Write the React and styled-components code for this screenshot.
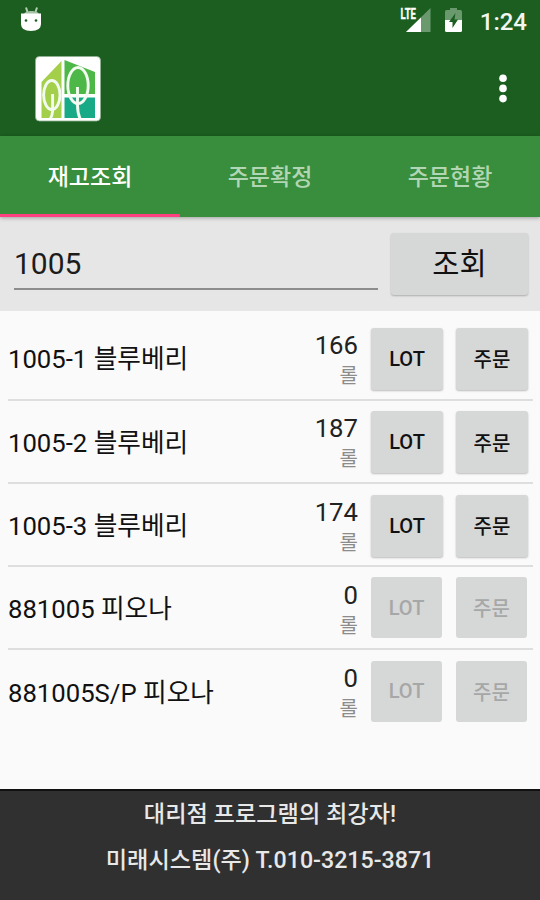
import React, { useState } from "react";
import styled, { createGlobalStyle } from "styled-components";

const GlobalStyle = createGlobalStyle`
  * {
    box-sizing: border-box;
  }
  body {
    margin: 0;
    background-color: #fafafa;
    font-family: Roboto, "Noto Sans CJK KR", sans-serif;
  }
  button, input {
    font-family: inherit;
  }
`;

const Layout = styled.div`
  width: 540px;
  height: 900px;
  display: flex;
  flex-direction: column;
  overflow: hidden;
  background-color: #fafafa;
`;

const StatusBar = styled.div`
  height: 42px;
  flex: none;
  padding: 0 13px 0 19px;
  display: flex;
  justify-content: space-between;
  background-color: #1b5e20;
`;

const StatusIcons = styled.div`
  display: flex;
  align-items: flex-start;
`;

const Clock = styled.span`
  margin: 8px 0 0 18px;
  line-height: 28px;
  font-size: 24px;
  font-weight: 500;
  color: #f1f6f1;
`;

const AppBar = styled.header`
  height: 93.5px;
  flex: none;
  padding: 0 27px 0 34px;
  display: flex;
  align-items: center;
  justify-content: space-between;
  background-color: #1b5e20;
`;

const MenuButton = styled.button`
  width: 18px;
  height: 36px;
  padding: 0;
  border: none;
  background: none;
`;

const Tabs = styled.nav`
  height: 81px;
  flex: none;
  display: flex;
  background-color: #388e3c;
  position: relative;
  box-shadow: 0 1px 4px rgba(0, 0, 0, 0.3);
`;

const Tab = styled.button`
  flex: 1;
  padding: 1px 0 0;
  border: none;
  border-bottom: 3px solid ${(props) => (props.$active ? "#ff4081" : "transparent")};
  background: none;
  font-size: 23px;
  font-weight: 500;
  color: ${(props) => (props.$active ? "#fff" : "#b2d6b4")};
`;

const SearchBar = styled.section`
  height: 94.5px;
  flex: none;
  padding: 16px 12px 15px 14px;
  display: flex;
  gap: 13px;
  background-color: #e6e6e6;
`;

const SearchInput = styled.input`
  flex: 1;
  min-width: 0;
  height: 57px;
  padding: 7px 0 0;
  border: none;
  border-bottom: 2px solid #8d8d8d;
  border-radius: 0;
  outline: none;
  background: none;
  font-size: 30px;
  color: #1c1c1c;
`;

const Button = styled.button`
  width: 72px;
  height: 62px;
  flex: none;
  padding: 0;
  border: none;
  border-radius: 3px;
  background-color: #d6d7d7;
  font-size: 20px;
  font-weight: 500;
  color: #111;
  box-shadow: 0 1px 2px rgba(0, 0, 0, 0.25);

  &:disabled {
    width: 71px;
    height: 61px;
    margin: 0 1px 2px 0;
    color: #a6a7a7;
    box-shadow: none;
  }
`;

const SearchButton = styled(Button)`
  width: 137px;
  height: 62px;
  padding-bottom: 5px;
  font-size: 29.5px;
  font-weight: 400;
`;

const StockList = styled.ul`
  flex: 1;
  margin: 0;
  padding: 6.3px 7px 0 8px;
  list-style: none;
`;

const StockItem = styled.li`
  height: 83.3px;
  padding: 2px 5px 0 0;
  display: flex;
  align-items: center;
  border-bottom: 2px solid #dedede;

  &:last-child {
    border-bottom-color: transparent;
  }
`;

const StockName = styled.div`
  flex: 1;
  padding-bottom: 4px;
  font-size: 25.7px;
  color: #111;
`;

const StockCount = styled.div`
  margin-right: 13px;
  padding-top: 3px;
  display: flex;
  flex-direction: column;
  align-items: flex-end;
`;

const Quantity = styled.span`
  line-height: 32px;
  font-size: 25.7px;
  color: #222;
`;

const Unit = styled.span`
  line-height: 31px;
  font-size: 20px;
  color: #8c8c8c;
`;

const ButtonGroup = styled.div`
  display: flex;
  align-items: center;
  gap: 13px;
`;

const Footer = styled.footer`
  height: 111px;
  flex: none;
  padding-top: 0;
  border-top: 2px solid #111;
  background-color: #303030;
  text-align: center;
`;

const FooterText = styled.p`
  margin: 0;
  line-height: 46px;
  font-size: 23.2px;
  font-weight: 500;
  color: #e8e8e8;
`;

const AndroidIcon = () => (
  <svg width="24" height="42" viewBox="0 0 24 42">
    <path d="M7 7.5l1.5 4.5M18 7.5l-1.5 4.5" stroke="#b7ceb8" strokeWidth="2" />
    <path d="M5 14.2C6 10 19 10 20 14.2Z" fill="#a5c2a7" />
    <path d="M2 13.5H22V24Q22 31 12 31T2 24Z" fill="#fff" />
    <circle cx="7" cy="20.5" r="1.3" fill="#1b5e20" />
    <circle cx="17" cy="20.5" r="1.3" fill="#1b5e20" />
  </svg>
);

const SignalIcon = () => (
  <svg width="32" height="42" viewBox="0 0 32 42">
    <path d="M31.5 8V32H7Z" fill="#6b996e" />
    <path d="M22 17.5V32H7Z" fill="#fff" />
    <path d="M0 6H17.5V18.5L15.5 20.5H0Z" fill="#1b5e20" />
    <text
      x="1.5"
      y="19"
      fontSize="15"
      fontWeight="700"
      fill="#fff"
      stroke="#fff"
      strokeWidth="0.3"
      textLength="15.5"
      lengthAdjust="spacingAndGlyphs"
    >
      LTE
    </text>
  </svg>
);

const BatteryIcon = () => (
  <svg width="17" height="42" viewBox="0 0 17 42" style={{ marginLeft: 14 }}>
    <path d="M5 8H12V10H15.5Q17 10 17 12V20H0V12Q0 10 1.5 10H5Z" fill="#6b996e" />
    <path d="M0 20H17V30.5Q17 32 15.5 32H1.5Q0 32 0 30.5Z" fill="#fff" />
    <path d="M10.5 13L4 22H7.5V28L13 19.5H9.5Z" fill="#1b5e20" />
  </svg>
);

const Logo = () => (
  <svg width="68" height="68" viewBox="0 0 68 68">
    <rect x="1.5" y="1.5" width="65" height="64.5" rx="4" fill="#fff" stroke="#8fb092" strokeWidth="0.8" />
    <path d="M7.5 27L27.5 6V63H7.5Z" fill="#a3cf4a" />
    <path d="M30.5 5L61 17V39H30.5Z" fill="#4db848" />
    <path d="M30.5 42.5H61V63H30.5Z" fill="#18a986" />
    <g fill="none" stroke="#f3faef" strokeWidth="2.9">
      <ellipse cx="17.8" cy="40" rx="8.2" ry="14.5" />
      <path d="M18.6 39V56Q18.4 60 16.5 63.5" />
      <ellipse cx="44" cy="30.5" rx="10.2" ry="18" />
      <path d="M43.5 32V50Q43.5 58 46 63.5" />
    </g>
  </svg>
);

const MoreIcon = () => (
  <svg width="18" height="36" viewBox="0 0 18 36" fill="#fff">
    <circle cx="8" cy="7.2" r="3.8" />
    <circle cx="8" cy="17.4" r="3.8" />
    <circle cx="8" cy="27.6" r="3.8" />
  </svg>
);

const tabs = ["재고조회", "주문확정", "주문현황"];

const stocks = [
  { name: "1005-1 블루베리", quantity: 166 },
  { name: "1005-2 블루베리", quantity: 187 },
  { name: "1005-3 블루베리", quantity: 174 },
  { name: "881005 피오나", quantity: 0 },
  { name: "881005S/P 피오나", quantity: 0 },
];

const App = () => {
  const [activeTab, setActiveTab] = useState(tabs[0]);
  const [keyword, setKeyword] = useState("1005");

  return (
    <>
      <GlobalStyle />
      <Layout>
        <StatusBar>
          <AndroidIcon />
          <StatusIcons>
            <SignalIcon />
            <BatteryIcon />
            <Clock>1:24</Clock>
          </StatusIcons>
        </StatusBar>
        <AppBar>
          <Logo />
          <MenuButton>
            <MoreIcon />
          </MenuButton>
        </AppBar>
        <Tabs>
          {tabs.map((tab) => (
            <Tab key={tab} $active={tab === activeTab} onClick={() => setActiveTab(tab)}>
              {tab}
            </Tab>
          ))}
        </Tabs>
        <SearchBar>
          <SearchInput value={keyword} onChange={(e) => setKeyword(e.target.value)} />
          <SearchButton>조회</SearchButton>
        </SearchBar>
        <StockList>
          {stocks.map((stock) => (
            <StockItem key={stock.name}>
              <StockName>{stock.name}</StockName>
              <StockCount>
                <Quantity>{stock.quantity}</Quantity>
                <Unit>롤</Unit>
              </StockCount>
              {/* 재고가 없으면 주문 불가 */}
              <ButtonGroup>
                <Button disabled={stock.quantity === 0}>LOT</Button>
                <Button disabled={stock.quantity === 0}>주문</Button>
              </ButtonGroup>
            </StockItem>
          ))}
        </StockList>
        <Footer>
          <FooterText>대리점 프로그램의 최강자!</FooterText>
          <FooterText>미래시스템(주) T.010-3215-3871</FooterText>
        </Footer>
      </Layout>
    </>
  );
};

export default App;
